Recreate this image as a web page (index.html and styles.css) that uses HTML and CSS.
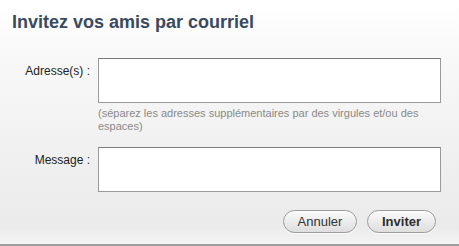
FILE: index.html
```html
<!DOCTYPE html>
<html lang="fr">
<head>
<meta charset="utf-8">
<title>Invitez vos amis par courriel</title>
<link rel="stylesheet" href="styles.css">
</head>
<body>
<div class="dialog">
  <h1 class="title">Invitez vos amis par courriel</h1>
  <form class="form">
    <label class="label" for="adr">Adresse(s) :</label>
    <div class="field">
      <textarea id="adr" class="box"></textarea>
      <p class="hint">(séparez les adresses supplémentaires par des virgules et/ou des espaces)</p>
    </div>
    <label class="label label-msg" for="msg">Message :</label>
    <div class="field field-msg">
      <textarea id="msg" class="box"></textarea>
    </div>
    <div class="actions">
      <button type="button" class="btn">Annuler</button>
      <button type="button" class="btn btn-primary">Inviter</button>
    </div>
  </form>
</div>
</body>
</html>
```
FILE: styles.css
```css
html, body {
  margin: 0;
  padding: 0;
}
body {
  width: 459px;
  height: 246px;
  overflow: hidden;
  font-family: "Liberation Sans", Arial, sans-serif;
}
.dialog {
  box-sizing: border-box;
  width: 459px;
  height: 246px;
  padding: 12px 18px 0 12px;
  background: linear-gradient(to bottom, #ffffff 0px, #f8f8f8 60px, #eeeeee 180px, #ebebeb 228px, #f3f3f3 242px, #f5f5f5 243px);
  border-bottom: 2px solid #9d9d9d;
}
.title {
  margin: 0;
  font-size: 18px;
  line-height: 21px;
  font-weight: bold;
  color: #3a4a5e;
}
.form {
  margin-top: 25px;
  display: grid;
  grid-template-columns: 78px 343px;
  column-gap: 8px;
}
.label {
  font-size: 12px;
  line-height: 14px;
  color: #222;
  text-align: right;
  padding-top: 6px;
}
.box {
  display: block;
  box-sizing: border-box;
  width: 343px;
  height: 45px;
  margin: 0;
  padding: 2px 4px;
  border: 1px solid #9a9a9a;
  border-top-color: #7a7a7a;
  background: #fff;
  resize: none;
  outline: none;
  font-family: inherit;
}
.hint {
  margin: 4px 0 0 0;
  font-size: 11px;
  line-height: 13px;
  color: #8a8a8a;
}
.label-msg {
  margin-top: 14px;
}
.field-msg {
  margin-top: 14px;
}
.actions {
  grid-column: 1 / 3;
  display: flex;
  justify-content: flex-end;
  gap: 10px;
  margin-top: 18px;
  padding-right: 5px;
}
.btn {
  box-sizing: border-box;
  height: 23px;
  width: 74px;
  padding: 0;
  border: 1px solid #9b9b9b;
  border-radius: 12px;
  background: linear-gradient(to bottom, #fbfbfb 0%, #ececec 50%, #dedede 100%);
  font-family: inherit;
  font-size: 13px;
  color: #333;
  box-shadow: 0 1px 0 rgba(255,255,255,0.8);
}
.btn-primary {
  width: 69px;
  font-weight: bold;
  color: #2e2e2e;
}
```
